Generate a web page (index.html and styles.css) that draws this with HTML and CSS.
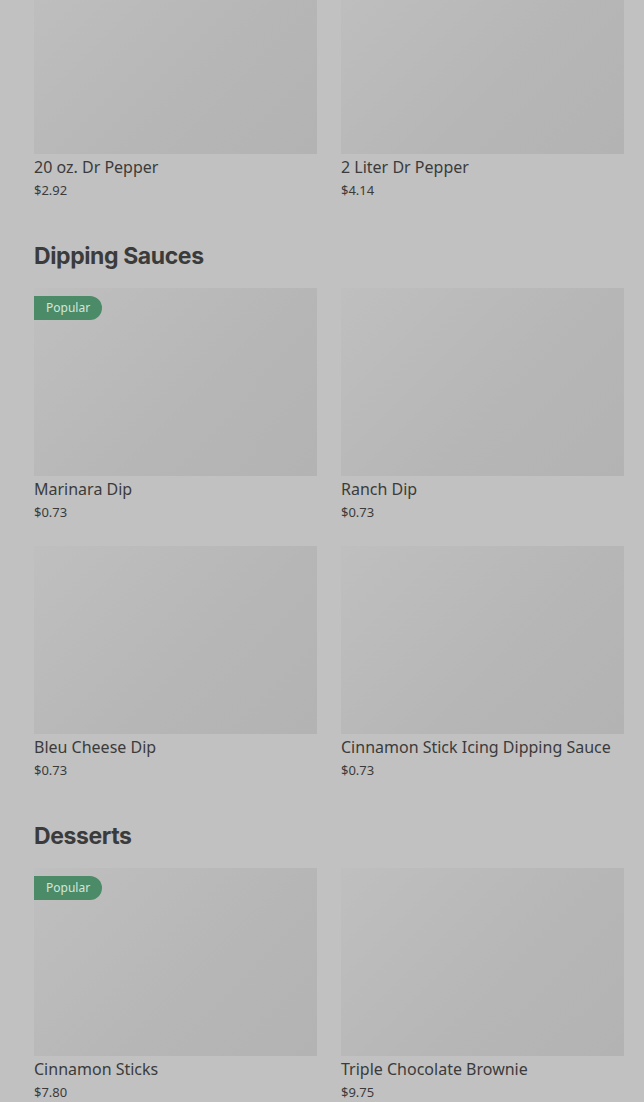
FILE: index.html
```html
<!DOCTYPE html>
<html lang="en">
<head>
    <meta charset="UTF-8">
    <meta name="viewport" content="width=device-width, initial-scale=1.0">
    <title>Menu</title>
    <link rel="stylesheet" href="styles.css">
</head>
<body>
    <main class="menu">
        <div class="grid first-row">
            <div class="item">
                <div class="thumb"></div>
                <div class="name">20 oz. Dr Pepper</div>
                <div class="price">$2.92</div>
            </div>
            <div class="item">
                <div class="thumb"></div>
                <div class="name">2 Liter Dr Pepper</div>
                <div class="price">$4.14</div>
            </div>
        </div>

        <section class="section">
            <h2>Dipping Sauces</h2>
            <div class="grid">
                <div class="item">
                    <div class="thumb"><span class="badge">Popular</span></div>
                    <div class="name">Marinara Dip</div>
                    <div class="price">$0.73</div>
                </div>
                <div class="item">
                    <div class="thumb"></div>
                    <div class="name">Ranch Dip</div>
                    <div class="price">$0.73</div>
                </div>
                <div class="item">
                    <div class="thumb"></div>
                    <div class="name">Bleu Cheese Dip</div>
                    <div class="price">$0.73</div>
                </div>
                <div class="item">
                    <div class="thumb"></div>
                    <div class="name">Cinnamon Stick Icing Dipping Sauce</div>
                    <div class="price">$0.73</div>
                </div>
            </div>
        </section>

        <section class="section">
            <h2>Desserts</h2>
            <div class="grid">
                <div class="item">
                    <div class="thumb"><span class="badge">Popular</span></div>
                    <div class="name">Cinnamon Sticks</div>
                    <div class="price">$7.80</div>
                </div>
                <div class="item">
                    <div class="thumb"></div>
                    <div class="name">Triple Chocolate Brownie</div>
                    <div class="price">$9.75</div>
                </div>
            </div>
        </section>
    </main>
</body>
</html>
```

FILE: styles.css
```css
body {
    margin: 0;
    background: #c1c1c1;
    color: #3b3b3b;
    font-family: "Noto Sans", Roboto, sans-serif;
    overflow: hidden;
}

.menu {
    padding: 0 20px 0 34px;
}

.first-row {
    margin-top: -34px;
}

.grid {
    display: grid;
    grid-template-columns: 1fr 1fr;
    column-gap: 24px;
    row-gap: 24px;
}

.thumb {
    position: relative;
    height: 188px;
    background: linear-gradient(135deg, #bfbfbf 0%, #b6b6b6 60%, #b3b3b3 100%);
}

.name {
    margin-top: 2px;
    font-size: 16px;
    line-height: 22px;
    white-space: nowrap;
}

.price {
    margin-top: 2px;
    font-size: 13px;
    line-height: 20px;
}

.badge {
    position: absolute;
    top: 8px;
    left: 0;
    padding: 0 12px;
    height: 24px;
    line-height: 24px;
    font-size: 12px;
    color: #d3e6da;
    background: #4b8b68;
    border-radius: 0 12px 12px 0;
}

.section h2 {
    margin: 40px 0 16px;
    font-family: Inter, sans-serif;
    font-size: 23px;
    line-height: 32px;
    font-weight: 700;
    letter-spacing: -0.4px;
}
```
